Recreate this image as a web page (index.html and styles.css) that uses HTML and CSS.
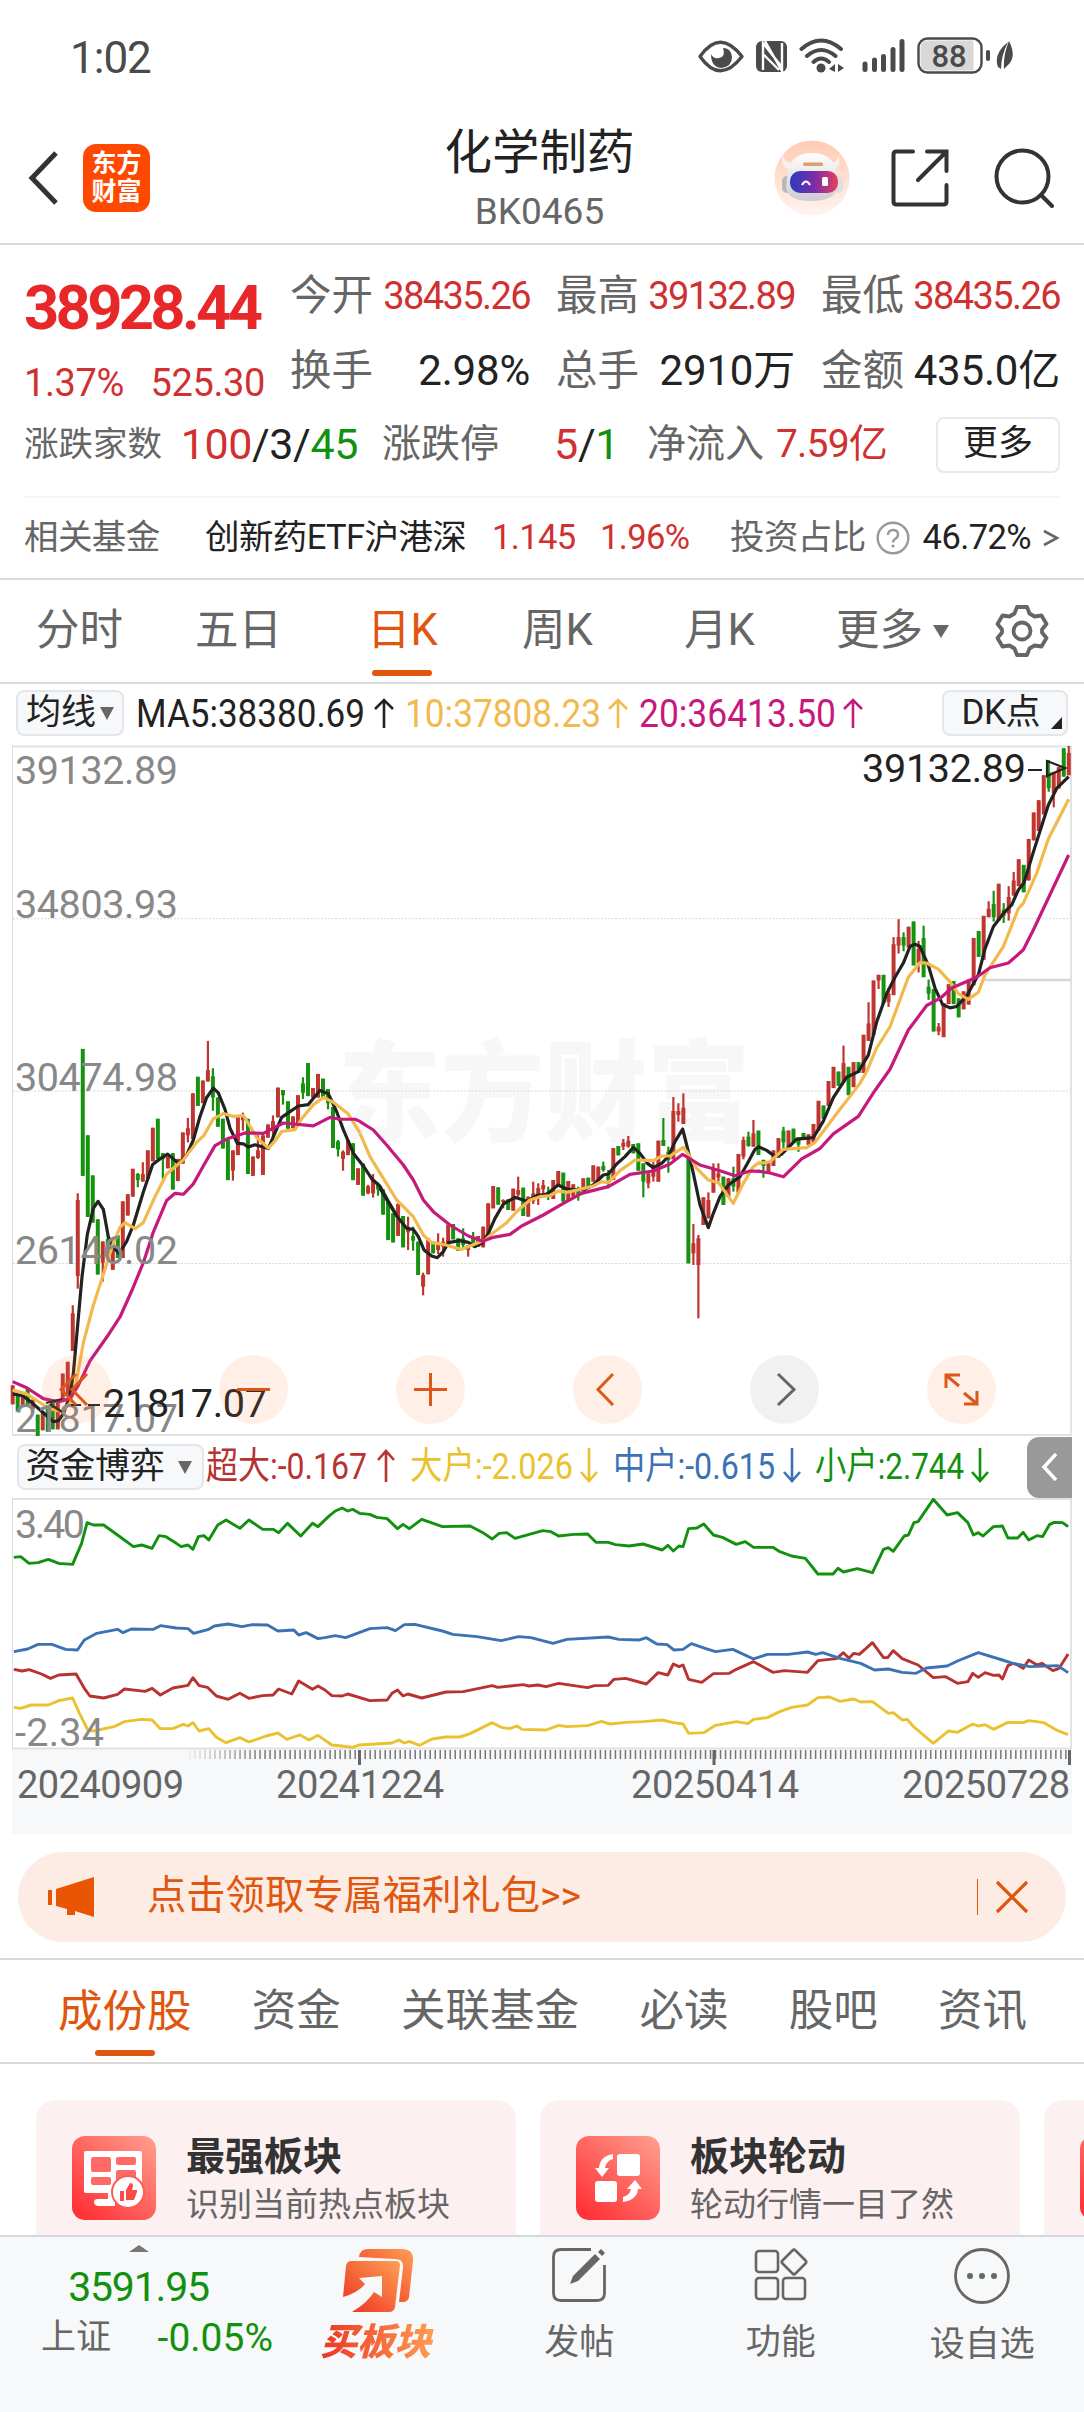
FILE: index.html
```html
<!DOCTYPE html>
<html lang="zh-CN">
<head>
    <title>化学制药 BK0465</title>
    <meta charset="utf-8">
    <link rel="stylesheet" href="styles.css">
</head>
<body>

<div class="status-bar">
    <span class="time">1:02</span>
    <svg class="status-icons" width="320" height="40" viewBox="695 36 320 40">
        <g fill="none" stroke="#4a4a4a" stroke-width="3.4">
            <path d="M700 56.500Q720 28 742 56.500Q720 85 700 56.500Z" stroke-linejoin="round"/>
        </g>
        <path d="M711 54q0 13 10 14q11-1 11-11q-1-9-9-9q3 9-4 10q-6 1-8-4z" fill="#4a4a4a"/>
        <rect x="756" y="41" width="31" height="31" rx="6" fill="#4a4a4a"/>
        <path d="M763 70V43L781 66M765 41l17 30V43M763 54l16 16" fill="none" stroke="#fff" stroke-width="2.400"/>
        <g fill="none" stroke="#4a4a4a" stroke-width="4" stroke-linecap="round">
            <path d="M801.500 49q19.500-17 39.500 0M807 56q14-12 28.500 0M813.500 62q7.500-7 15.500 0"/>
        </g>
        <circle cx="821" cy="68" r="4.500" fill="#4a4a4a"/>
        <path d="M835 64v8l-6-3zM838 64l6 4-6 4z" fill="#4a4a4a"/>
        <g stroke="#4a4a4a" stroke-width="5" stroke-linecap="round">
            <path d="M865 64v5.500M874.500 60v9.500M883.500 56.500v13M893 49.500v20M902 41.500v28"/>
        </g>
        <rect x="918.500" y="38.500" width="63" height="34" rx="9" fill="#fff" stroke="#4a4a4a" stroke-width="2.400"/>
        <path d="M928 40.500h45.500v30H928q-7.500 0-7.500-8V48.500q0-8 7.500-8z" fill="#d8d8d8"/>
        <text class="battery-text" x="949" y="66.500" text-anchor="middle">88</text>
        <rect x="986" y="50" width="4" height="11" rx="2" fill="#4a4a4a"/>
        <path d="M1009 41q8 16-1 24l-4 4q-1-14 5-28zM1008 42q-15 12-10 25l3 2q0-13 7-27z" fill="#4a4a4a"/>
    </svg>
</div>

<div class="header">
    <div class="header-left">
        <svg width="36" height="58" viewBox="0 0 36 58"><path d="M31 4L7 29l24 25" fill="none" stroke="#333" stroke-width="5"/></svg>
        <div class="logo">东方<br>财富</div>
    </div>
    <div class="header-title">
        <div class="name">化学制药</div>
        <div class="num">BK0465</div>
    </div>
    <div class="header-right">
        <svg width="76" height="76" viewBox="0 0 76 76">
            <defs>
                <linearGradient id="peach" x1="0" y1="0" x2="0" y2="1"><stop offset="0" stop-color="#ffcbb2"/><stop offset="1" stop-color="#fff4ef"/></linearGradient>
                <linearGradient id="visor"><stop offset="0" stop-color="#2b3cc0"/><stop offset="0.500" stop-color="#7a2ca8"/><stop offset="1" stop-color="#e8405c"/></linearGradient>
                <linearGradient id="helmet" x1="0" y1="0" x2="0" y2="1"><stop offset="0" stop-color="#fff"/><stop offset="1" stop-color="#cfcbd0"/></linearGradient>
            </defs>
            <circle cx="38" cy="38" r="37.500" fill="url(#peach)"/>
            <path d="M9 14q1 9 7 8l3 7-7-1q-6-4-3-14zM64 14q0 9-6 8l-3 7 7-1q6-4 2-14z" fill="#f6efee"/>
            <rect x="8" y="36" width="10" height="17" rx="5" fill="#bbb6bb"/>
            <rect x="59" y="36" width="10" height="17" rx="5" fill="#e2dde0"/>
            <path d="M38 13q20 0 24 17l2 17q-3 14-27 14T12 47l2-17q5-17 24-17z" fill="url(#helmet)"/>
            <rect x="29" y="22.500" width="20" height="3.500" rx="1.500" fill="#dca06c"/>
            <rect x="16" y="31" width="48" height="22" rx="10" fill="url(#visor)"/>
            <path d="M28 45q4-7 8 0" fill="none" stroke="#fff" stroke-width="2.200"/>
            <rect x="48" y="37" width="6" height="9" rx="1.500" fill="#fff"/>
        </svg>
        <svg width="58" height="58" viewBox="0 0 58 58" fill="none" stroke="#333" stroke-width="4" stroke-linecap="round">
            <path d="M22 2.500H5.500q-3 0-3 3v47q0 3 3 3h47q3 0 3-3V36M36 2.500h19.500V22M54 4L27 31"/>
        </svg>
        <svg width="60" height="60" viewBox="0 0 60 60" fill="none" stroke="#333" stroke-width="4" stroke-linecap="round">
            <circle cx="28.500" cy="28.500" r="26"/><path d="M47 47l11 11"/>
        </svg>
    </div>
</div>

<div class="quote">
    <div class="quote-main">
        <div class="price-box">
            <div class="price num up">38928.44</div>
            <div class="change num up"><span>1.37%</span><span>525.30</span></div>
        </div>
        <div class="stats">
            <div class="stat"><span class="label">今开</span><span class="num small up">38435.26</span></div>
            <div class="stat"><span class="label">最高</span><span class="num small up">39132.89</span></div>
            <div class="stat"><span class="label">最低</span><span class="num small up">38435.26</span></div>
            <div class="stat"><span class="label">换手</span><span class="num">2.98%</span></div>
            <div class="stat"><span class="label">总手</span><span class="num">2910万</span></div>
            <div class="stat"><span class="label">金额</span><span class="num">435.0亿</span></div>
        </div>
    </div>
    <div class="quote-extra">
        <div class="extra count"><span class="label">涨跌家数</span><span class="num"><b class="up">100</b>/3/<b class="down">45</b></span></div>
        <div class="extra limit"><span class="label">涨跌停</span><span class="num"><b class="up">5</b>/<b class="down">1</b></span></div>
        <div class="extra inflow"><span class="label">净流入</span><span class="num up">7.59亿</span></div>
        <div class="more-btn">更多</div>
    </div>
    <div class="fund">
        <span class="gray fund-label">相关基金</span>
        <span class="fund-name">创新药ETF沪港深</span>
        <span class="up fund-price">1.145</span>
        <span class="up fund-pct">1.96%</span>
        <span class="gray">投资占比</span>
        <svg class="help" width="34" height="34" viewBox="0 0 34 34"><circle cx="17" cy="17" r="15.300" fill="none" stroke="#999" stroke-width="2.400"/><path d="M12 14q0-5 5-5t5 4.500q0 3-3 4.500-2 1-2 3.500" fill="none" stroke="#999" stroke-width="2.400"/><circle cx="17" cy="25" r="1.600" fill="#999"/></svg>
        <span class="fund-ratio">46.72%</span>
        <svg class="fund-more" width="18" height="18" viewBox="0 0 18 18"><path d="M2 2l13 7-13 7" fill="none" stroke="#666" stroke-width="2.600"/></svg>
    </div>
</div>

<div class="period-tabs">
    <span>分时</span>
    <span>五日</span>
    <span><span class="active">日K</span></span>
    <span>周K</span>
    <span>月K</span>
    <span class="more">更多<i class="caret"></i></span>
    <svg width="54" height="54" viewBox="0 0 54 54" fill="none" stroke="#666" stroke-width="3.800" stroke-linejoin="round">
        <path d="M22 3h10l2.500 6.500 5 3 7-1L51.500 20l-4.500 5.500v3l4.500 5.500-5 8.500-7-1-5 3L32 51H22l-2.500-6.500-5-3-7 1-5-8.500L7 28.500v-3L2.500 20l5-8.500 7 1 5-3z"/>
        <circle cx="27" cy="27" r="8.500"/>
    </svg>
</div>

<div class="ma-bar">
    <div class="pill">均线<i class="caret"></i></div>
    <svg class="legend" width="740" height="46" viewBox="134 690 740 46">
        <g fill="#222"><text x="136" y="727" textLength="229" lengthAdjust="spacingAndGlyphs">MA5:38380.69</text></g>
        <g fill="#f2b94c"><text x="405" y="727" textLength="196" lengthAdjust="spacingAndGlyphs">10:37808.23</text></g>
        <g fill="#c5197d"><text x="639" y="727" textLength="197" lengthAdjust="spacingAndGlyphs">20:36413.50</text></g>
        <g fill="none" stroke-width="2.600">
            <path d="M384 728V700M375 709l9-9 9 9" stroke="#222"/>
            <path d="M618 728V700M609 709l9-9 9 9" stroke="#f2b94c"/>
            <path d="M853 728V700M844 709l9-9 9 9" stroke="#c5197d"/>
        </g>
    </svg>
    <div class="pill dk">DK点<i class="corner"></i></div>
</div>

<svg class="kline" width="1084" height="696" viewBox="0 740 1084 696">
    <text class="watermark" x="338" y="1133" textLength="412" lengthAdjust="spacingAndGlyphs">东方财富</text>
    <path d="M13 918.700H1071M13 1091H1071M13 1263.500H1071" stroke="#d8d8d8" stroke-dasharray="2 1.500"/>
    <path d="M12 746.500H1072M12 1435H1072M1071 746V1436" stroke="#e2e2e2" stroke-width="2"/>
    <path d="M12.500 746V1436" stroke="#dcdcdc"/>
    <path d="M985 980H1071" stroke="#d3d7da" stroke-width="2.500"/>
    <g id="candles"></g>
    <g class="ma" transform="translate(0 720) scale(0.33333 0.47192)">
        <polyline class="ma5" points="38,1428 68,1432 98,1448 130,1468 160,1487 175,1485 190,1470 210,1432 220,1385 232,1290 246,1180 262,1090 280,1035 294,1020 310,1037 325,1095 340,1118 358,1130 380,1105 400,1070 430,1000 458,942 480,930 503,920 520,930 535,940 560,922 580,890 600,840 620,800 640,780 655,790 675,825 690,865 712,897 730,898 745,905 765,900 805,908 825,875 845,842 870,830 895,818 925,815 942,800 960,785 985,792 1010,830 1030,868 1060,918 1090,945 1115,972 1140,988 1165,1020 1190,1050"/>
        <polyline class="ma10" points="38,1420 80,1428 110,1442 150,1460 185,1465 210,1448 228,1405 250,1320 280,1240 310,1175 340,1108 360,1075 375,1065 405,1078 430,1065 465,1010 500,962 550,932 590,895 612,880 640,845 670,834 700,840 730,838 745,855 770,885 805,907 825,892 845,872 885,868 905,845 940,815 970,800 1000,810 1045,835 1080,875"/>
        <polyline class="ma20" points="38,1402 80,1415 130,1438 175,1445 210,1438 235,1410 270,1358 320,1308 360,1265 395,1210 430,1150 460,1085 500,1018 525,1003 550,1005 580,983 610,945 645,902 680,888 735,875 790,876 850,854 940,860 990,842 1020,846 1065,846 1082,851"/>
    </g>
    <g class="ma" transform="translate(360 1000) scale(0.33333)">
        <polyline class="ma5" points="60,565 90,615 110,648 140,685 160,688 175,710 192,750 215,768 232,773 250,755 265,728 300,722 325,727 345,740 368,728 385,700 405,655 430,612 465,592 500,604 530,587 562,582 594,555 620,567 670,570 700,555 730,525 745,522 770,492 795,470 820,442 840,460 862,490 880,503 905,490 925,470 945,425 968,387 985,455 1000,520 1020,615 1045,683 1060,640 1080,590 1105,555 1140,530 1165,485 1185,448 1200,438"/>
        <polyline class="ma10" points="0,400 30,470 70,535 110,600 160,650 190,705 215,728 250,733 280,742 305,748 330,738 375,720 400,698 440,668 475,630 510,600 540,590 570,587 595,573 620,577 660,568 700,558 725,545 745,548 780,512 825,480 880,482 905,468 930,468 950,455 970,442 985,462 1010,505 1045,540 1075,548 1120,610 1150,550 1180,500 1200,485"/>
        <polyline class="ma20" points="0,365 40,390 80,435 130,495 160,540 190,600 220,635 270,675 325,708 368,724 400,712 450,703 485,678 550,645 610,610 665,580 745,560 810,523 880,513 930,492 968,463 1020,495 1080,512 1125,527 1170,513 1200,514"/>
    </g>
    <g class="ma" transform="translate(700 720) scale(0.33333 0.47192)">
        <polyline class="ma5" points="175,904 200,912 225,925 245,920 290,888 340,885 370,850 400,800 440,757 475,745 505,710 530,640 560,580 585,545 610,515 630,480 645,475 660,480 685,520 705,568 728,603 750,610 770,607 800,585 835,540 855,485 880,438 910,410 935,392 955,360 972,345 1000,280 1045,180 1070,145 1106,120"/>
        <polyline class="ma10" points="175,940 210,936 250,910 320,906 345,895 420,825 480,770 500,745 530,695 570,650 625,545 660,514 680,515 715,528 750,555 775,580 805,592 835,577 855,540 910,480 955,400 970,388 1010,325 1045,252 1106,168"/>
        <polyline class="ma20" points="175,956 210,960 250,968 305,930 360,908 400,877 475,840 525,785 570,740 625,657 680,605 720,590 755,568 830,545 870,525 925,515 970,487 1000,445 1030,400 1060,355 1106,286"/>
    </g>
    <path d="M1028 770h14M1047 761l18 7-18 8z" fill="none" stroke="#222" stroke-width="2.200"/>
    <g class="axis">
        <text x="15" y="784" textLength="163">39132.89</text>
        <text x="15" y="918" textLength="163">34803.93</text>
        <text x="15" y="1091" textLength="163">30474.98</text>
        <text x="15" y="1264" textLength="163">26146.02</text>
        <text x="15" y="1431.500" textLength="163">21817.07</text>
    </g>
    <g class="mark">
        <text x="862" y="781.500" textLength="164">39132.89</text>
        <text x="103" y="1417" textLength="164">21817.07</text>
        <path d="M46 1403l16-4M50 1404l12 8M71 1405h10M88 1405h12" fill="none" stroke="#222" stroke-width="2.200"/>
    </g>
    <g class="tools">
        <circle cx="76.500" cy="1389.500" r="34.500"/><circle cx="253.500" cy="1389.500" r="34.500"/><circle cx="430.500" cy="1389.500" r="34.500"/>
        <circle cx="607.500" cy="1389.500" r="34.500"/><circle cx="784.500" cy="1389.500" r="34.500" class="off"/><circle cx="961.500" cy="1389.500" r="34.500"/>
        <path d="M76 1374l-15 15.500 15 15.500M87 1374l-15 15.500 15 15.500M237 1389.500h33M414 1389.500h33M430.500 1373v33M613 1374l-15 15.500 15 15.500"/>
        <path d="M778 1374l16 15.500-16 15.500" class="off"/>
        <path d="M946 1388v-13h14M947 1376l12 10M964 1404h13v-13M976 1403l-12-10"/>
    </g>
</svg>

<div class="fund-bar">
    <div class="pill wide">资金博弈<i class="caret"></i></div>
    <svg class="legend" width="794" height="54" viewBox="205 1440 794 54">
        <g fill="#b83232"><text x="206" y="1479" textLength="161" lengthAdjust="spacingAndGlyphs">超大:-0.167</text></g>
        <g fill="#eac22f"><text x="410" y="1479" textLength="163" lengthAdjust="spacingAndGlyphs">大户:-2.026</text></g>
        <g fill="#3b72b4"><text x="613" y="1479" textLength="162" lengthAdjust="spacingAndGlyphs">中户:-0.615</text></g>
        <g fill="#12900f"><text x="815" y="1479" textLength="149" lengthAdjust="spacingAndGlyphs">小户:2.744</text></g>
        <g fill="none" stroke-width="2.600">
            <path d="M386 1482v-31M378 1460l8-9 8 9" stroke="#b83232"/>
            <path d="M589 1448v32M581 1472l8 9 8-9" stroke="#eac22f"/>
            <path d="M792 1448v32M784 1472l8 9 8-9" stroke="#3b72b4"/>
            <path d="M980 1448v32M972 1472l8 9 8-9" stroke="#12900f"/>
        </g>
    </svg>
    <div class="fold"><svg width="20" height="30" viewBox="0 0 20 30"><path d="M16 2L4 15l12 13" fill="none" stroke="#fff" stroke-width="3.500"/></svg></div>
</div>

<svg class="game" width="1084" height="336" viewBox="0 1498 1084 336">
    <rect x="12" y="1749" width="1060" height="85" fill="#f7f8fa"/>
    <path d="M12 1499H1072M12 1748.500H1072M1071 1499V1749" stroke="#e2e2e2" stroke-width="2"/>
    <path d="M12.500 1499V1749" stroke="#dcdcdc"/>
    <g class="flow" transform="translate(0 1420) scale(0.69133 0.33333)">
        <polyline stroke="#eac22f" points="20,862 30,865 45,855 70,855 85,842 105,834 115,880 127,930 135,933 165,920 180,905 205,898 220,900 232,926 250,926 265,913 272,918 279,908 288,933 302,926 313,952 327,968 347,953 360,966 385,948 402,939 415,958 434,945 447,960 460,946 480,975 495,978 510,982 520,975 567,969 577,960 585,969 592,964 607,976 625,957 645,951 665,951 680,941 712,908 725,922 737,926 748,918 755,928 790,930 808,916 820,920 850,917 870,904 882,912 905,907 930,905 958,900 974,908 988,912 996,940 1018,938 1035,916 1065,905 1082,911 1090,898 1110,893 1128,875 1145,862 1168,855 1183,833 1200,831 1215,844 1235,837 1245,846 1262,845 1285,880 1292,878 1305,900 1312,898 1322,921 1350,970 1372,933 1385,937 1407,912 1415,918 1425,914 1437,928 1458,907 1480,908 1488,902 1510,908 1530,932 1545,944"/>
        <polyline stroke="#b83232" points="20,748 32,753 42,749 60,762 73,775 85,765 110,762 122,805 130,828 150,834 170,823 180,807 210,814 220,805 232,825 250,804 272,796 279,773 288,797 300,802 313,828 330,838 347,820 360,835 380,827 395,825 403,807 422,822 432,783 452,808 460,798 470,810 480,827 495,828 503,822 535,842 560,840 567,820 575,810 583,828 590,822 610,834 645,816 670,815 712,797 720,802 757,794 765,798 778,795 790,800 808,790 850,803 860,797 880,796 888,778 905,775 935,792 952,758 966,765 974,732 982,740 988,735 996,778 1015,787 1032,761 1055,760 1065,748 1090,725 1118,757 1135,752 1168,757 1183,722 1210,716 1220,698 1228,715 1235,700 1243,703 1262,668 1278,713 1284,713 1292,692 1305,716 1328,735 1350,773 1368,770 1385,790 1400,785 1407,760 1415,772 1425,758 1437,766 1445,765 1450,777 1458,737 1465,730 1472,735 1480,745 1488,720 1500,735 1507,730 1523,752 1532,745 1545,702"/>
        <polyline stroke="#3b72b4" points="20,695 40,687 55,673 75,673 95,688 112,690 122,660 140,640 170,628 178,638 190,627 222,628 232,617 255,624 272,626 280,640 302,628 310,618 330,612 350,620 365,614 387,615 402,633 425,630 432,645 443,638 460,656 470,653 485,647 500,653 535,626 560,623 572,632 585,614 600,613 640,633 655,643 690,650 725,662 750,650 768,653 800,670 820,658 880,651 895,658 925,660 935,653 950,672 965,674 975,690 988,688 1000,671 1020,685 1035,695 1060,688 1090,717 1110,703 1140,703 1168,696 1180,703 1190,698 1215,715 1245,730 1265,750 1285,747 1305,757 1325,760 1340,744 1370,738 1385,723 1415,698 1450,720 1465,730 1490,740 1530,737 1545,758"/>
        <polyline stroke="#12900f" points="20,412 30,410 42,430 55,428 70,418 85,430 105,433 118,370 126,308 135,315 150,315 170,345 193,380 205,375 220,385 230,347 240,350 255,370 262,380 272,375 279,388 287,350 295,347 302,360 315,315 327,300 347,325 360,300 380,328 395,328 403,338 416,310 435,348 452,310 460,320 475,290 485,273 495,264 503,273 510,268 520,280 535,283 545,292 560,296 575,326 583,313 592,326 610,298 640,320 680,318 700,340 712,357 722,340 733,338 745,355 785,332 797,335 808,348 830,343 850,342 862,367 880,367 890,374 910,378 930,372 958,390 966,376 974,393 982,378 988,380 996,326 1008,324 1018,312 1032,345 1045,352 1065,373 1078,365 1090,382 1118,382 1128,395 1145,408 1165,415 1183,462 1205,462 1212,445 1220,456 1240,446 1262,458 1278,388 1285,383 1292,394 1308,348 1314,345 1322,308 1328,305 1350,238 1370,285 1385,278 1400,308 1408,345 1415,338 1422,348 1437,320 1450,318 1458,354 1472,354 1480,337 1488,360 1500,347 1508,350 1518,314 1525,307 1537,308 1545,320"/>
    </g>
    <g class="axis">
        <text x="15" y="1538" textLength="70">3.40</text>
        <text x="15" y="1746" textLength="89">-2.34</text>
    </g>
    <g id="ticks"></g>
    <g class="dates">
        <text x="17" y="1798" textLength="167">20240909</text>
        <text x="276" y="1798" textLength="168">20241224</text>
        <text x="631" y="1798" textLength="168">20250414</text>
        <text x="902" y="1798" textLength="168">20250728</text>
    </g>
</svg>

<div class="banner">
    <svg width="48" height="42" viewBox="0 0 48 42"><path d="M0 14h4v15H0zM8 13L46 1v40l-19-6v4h-8v-6l-11-3z" fill="#ea5504"/></svg>
    <span>点击领取专属福利礼包&gt;&gt;</span>
    <i class="line"></i>
    <svg width="34" height="34" viewBox="0 0 34 34"><path d="M2 2l30 30M32 2L2 32" fill="none" stroke="#e0560e" stroke-width="3.200"/></svg>
</div>

<div class="info-tabs">
    <span class="active">成份股</span>
    <span>资金</span>
    <span>关联基金</span>
    <span>必读</span>
    <span>股吧</span>
    <span>资讯</span>
</div>

<div class="cards">
    <div class="card">
        <svg width="84" height="84" viewBox="0 0 84 84">
            <defs><linearGradient id="red" x1="1" y1="0.100" x2="0.200" y2="1"><stop offset="0" stop-color="#ff9a8a"/><stop offset="1" stop-color="#ff3338"/></linearGradient></defs>
            <rect width="84" height="84" rx="13" fill="url(#red)"/>
            <path d="M14 15h54q2 0 2 2v38q0 2-2 2H14q-2 0-2-2V17q0-2 2-2z" fill="#fff"/>
            <path d="M36 55h7v15H26q-4-1-4-4t4-3h10z" fill="#fff"/>
            <g fill="#ff6a66"><rect x="19" y="21" width="20" height="15" rx="2"/><rect x="44" y="21" width="20" height="8" rx="2"/><rect x="19" y="41" width="20" height="8" rx="2"/><rect x="44" y="34" width="20" height="16" rx="2"/></g>
            <circle cx="56" cy="56" r="17" fill="#ff5a58"/><circle cx="56" cy="56" r="15" fill="#fff"/>
            <path d="M48 55h4v10h-4zM54 54l4-7q3 0 3 3l-1 4h5v2l-3 8h-8z" fill="#ff4a4a"/>
        </svg>
        <div class="card-text">
            <div class="card-title">最强板块</div>
            <div class="card-desc">识别当前热点板块</div>
        </div>
    </div>
    <div class="card">
        <svg width="84" height="84" viewBox="0 0 84 84">
            <rect width="84" height="84" rx="13" fill="url(#red)"/>
            <g fill="#fff"><rect x="41" y="18" width="23" height="22" rx="3"/><rect x="19" y="45" width="22" height="21" rx="3"/>
            <path d="M37 18v5q-7 2-8 9h4l-7 9-7-9h4q1-12 14-14zM47 66v-5q7-2 8-8h-4l8-9 7 9h-4q-1 11-15 13z"/></g>
        </svg>
        <div class="card-text">
            <div class="card-title">板块轮动</div>
            <div class="card-desc">轮动行情一目了然</div>
        </div>
    </div>
    <div class="card">
        <svg width="84" height="84" viewBox="0 0 84 84"><rect width="84" height="84" rx="13" fill="url(#red)"/></svg>
    </div>
</div>

<div class="bottom-bar">
    <div class="index">
        <i class="tri"></i>
        <div class="index-value">3591.95</div>
        <div class="index-row"><span>上证</span><span class="down">-0.05%</span></div>
    </div>
    <div class="item buy">
        <svg width="72" height="66" viewBox="0 0 72 66">
            <defs><linearGradient id="orange" x1="1" y1="0" x2="0" y2="1"><stop offset="0" stop-color="#ffa054"/><stop offset="1" stop-color="#ec3020"/></linearGradient></defs>
            <path d="M17 9q1-8 9-8h34q12 0 11 12l-4 36q-1 5-6 5h-4l4-34q1-9-8-9z" fill="url(#orange)"/>
            <path d="M9 13h45q4 0 4 4l-5 42q-1 5-6 5H10Q25 55 32 44l8 5V28L17 30l6 6Q16 45 1 49L4 18q1-5 5-5z" fill="url(#orange)"/>
        </svg>
        <span>买板块</span>
    </div>
    <div class="item">
        <svg width="54" height="54" viewBox="0 0 54 54" fill="none" stroke="#666" stroke-width="2.800">
            <path d="M39 1.500H9q-7.500 0-7.500 7.500v36q0 7.500 7.500 7.500h36q7.500 0 7.500-7.500V17"/>
            <path d="M18 36l3-8L43 6l5 5-22 22zM46 4l3-3 4 4-3 3z" fill="#666" stroke="none"/>
        </svg>
        <span>发帖</span>
    </div>
    <div class="item">
        <svg width="54" height="54" viewBox="0 0 54 54" fill="none" stroke="#666" stroke-width="2.600">
            <rect x="2" y="3" width="22" height="21" rx="3"/><rect x="2" y="30" width="22" height="21" rx="3"/><rect x="29" y="30" width="22" height="21" rx="3"/>
            <path d="M38.500 2.500q1.500-1.500 3 0l10 10q1.500 1.500 0 3l-10 10q-1.500 1.500-3 0l-10-10q-1.500-1.500 0-3z"/>
        </svg>
        <span>功能</span>
    </div>
    <div class="item">
        <svg width="56" height="56" viewBox="0 0 56 56" fill="none" stroke="#666" stroke-width="2.800">
            <circle cx="28" cy="28" r="26.500"/>
            <g fill="#666" stroke="none"><circle cx="16" cy="28" r="3"/><circle cx="28" cy="28" r="3"/><circle cx="40" cy="28" r="3"/></g>
        </svg>
        <span>设自选</span>
    </div>
</div>

<script src="chart.js"></script>

</body>
</html>
```
FILE: styles.css
```css
body, html {
    margin: 0;
    padding: 0;
}
body {
    width: 1084px;
    height: 2412px;
    overflow: hidden;
    background: #fff;
    color: #222;
    font-family: Roboto, "Noto Sans CJK SC", sans-serif;
    font-size: 34px;
    line-height: 1;
    display: flex;
    flex-direction: column;
}
body > * {
    flex: none;
    box-sizing: border-box;
}
svg {
    display: block;
    flex: none;
}
b {
    font-weight: normal;
}
i {
    font-style: normal;
}
.up {
    color: #d03030;
}
.down {
    color: #12900f;
}
.gray {
    color: #666;
}

.status-bar {
    height: 116px;
    padding: 36px 69px 0 70px;
    display: flex;
    justify-content: space-between;
}
.time {
    font-size: 44px;
    line-height: 44px;
    color: #4a4a4a;
    letter-spacing: -1px;
}
.battery-text {
    font-size: 31px;
    font-weight: 500;
    fill: #4a4a4a;
}

.header {
    height: 129px;
    border-bottom: 2px solid #dadada;
    padding: 0 30px 0 25px;
    display: grid;
    grid-template-columns: 1fr auto 1fr;
}
.header-left {
    display: flex;
    align-items: center;
    padding-bottom: 4px;
    gap: 22px;
}
.logo {
    width: 67px;
    height: 68px;
    box-sizing: border-box;
    padding-top: 6px;
    border-radius: 13px;
    background: #ff4800;
    color: #fff;
    text-align: center;
    font-size: 25px;
    line-height: 28px;
    font-weight: 700;
}
.header-title {
    text-align: center;
    padding-top: 11px;
}
.header-title .name {
    font-size: 47.500px;
    line-height: 52px;
}
.header-title .num {
    font-size: 37px;
    line-height: 40px;
    margin-top: 13px;
    color: #666;
}
.header-right {
    display: flex;
    align-items: center;
    justify-content: flex-end;
    gap: 41px;
    padding-bottom: 4px;
}
.header-right svg:last-child {
    margin-left: 4px;
}

.quote {
    height: 335px;
    padding: 23px 24px 0;
    border-bottom: 2px solid #dadada;
}
.quote-main {
    display: flex;
    height: 142px;
}
.price-box {
    width: 266px;
}
.price {
    font-size: 61.500px;
    line-height: 62px;
    margin-top: 9px;
    font-weight: 700;
    letter-spacing: -3.700px;
    color: #e82828;
}
.change {
    display: flex;
    justify-content: space-between;
    width: 241px;
    margin-top: 25px;
    font-size: 38px;
    line-height: 38px;
    letter-spacing: -0.400px;
}
.stats {
    flex: 1;
    display: grid;
    grid-template-columns: 240px 239px 239px;
    grid-auto-rows: 75px;
    column-gap: 26px;
}
.stat {
    display: flex;
    justify-content: space-between;
    line-height: 56px;
}
.stat .label {
    font-size: 41.500px;
    color: #666;
}
.stat .num {
    font-size: 42px;
    letter-spacing: -0.200px;
}
.stat .small {
    font-size: 38px;
    letter-spacing: -1.600px;
}
.quote-extra {
    box-sizing: border-box;
    display: flex;
    align-items: center;
    height: 88px;
    border-bottom: 2px solid #f5f5f5;
    padding-bottom: 17px;
}
.extra {
    display: flex;
    align-items: center;
    justify-content: space-between;
}
.extra .label {
    font-size: 39px;
    color: #666;
}
.extra .num {
    font-size: 43px;
    letter-spacing: -0.400px;
}
.count {
    width: 334px;
}
.count .label {
    font-size: 34.500px;
}
.limit {
    width: 237px;
    margin-left: 24px;
}
.inflow {
    width: 240px;
    margin-left: 28px;
}
.extra.inflow .num {
    font-size: 39px;
    letter-spacing: -0.800px;
}
.more-btn {
    width: 120px;
    height: 52px;
    margin-left: auto;
    border: 2px solid #e9e9e9;
    border-radius: 8px;
    text-align: center;
    font-size: 35px;
    line-height: 50px;
}
.fund {
    display: flex;
    align-items: center;
    height: 79px;
    white-space: nowrap;
    font-size: 34.500px;
    letter-spacing: -0.600px;
}
.fund-label {
    width: 181px;
}
.fund-name {
    width: 287px;
}
.fund-price {
    width: 108px;
}
.fund-pct {
    width: 130px;
}
.help {
    margin-left: 10px;
}
.fund-ratio {
    margin-left: 13px;
}
.fund-more {
    margin-left: auto;
}

.period-tabs {
    height: 104px;
    padding: 0 0 0 36px;
    border-bottom: 2px solid #dadada;
    display: grid;
    grid-template-columns: 159px 172px 155px 162px 152px 159px 54px;
    align-items: center;
    font-size: 43.500px;
    color: #666;
}
.period-tabs span {
    line-height: 62px;
}
.active {
    width: max-content;
    color: #e0560e;
    display: flex;
    flex-direction: column;
    align-items: center;
}
.active:after {
    content: "";
    width: 60px;
    height: 6px;
    margin-top: 8px;
    margin-bottom: -14px;
    border-radius: 3px;
    background: #e0560e;
}
.more {
    display: flex;
    align-items: center;
}
.caret {
    display: inline-block;
    margin-left: 10px;
    border: 8px solid transparent;
    border-top: 13px solid #666;
    border-bottom: 0;
}

.ma-bar {
    height: 56px;
    padding: 6px 16px 0;
    display: flex;
}
.pill {
    box-sizing: border-box;
    width: 108px;
    height: 46px;
    border: 2px solid #e3e6ea;
    border-radius: 8px;
    background: #f7f8fa;
    display: flex;
    align-items: center;
    justify-content: center;
    font-size: 35px;
    line-height: 40px;
}
.pill .caret {
    margin-left: 4px;
    border-left-width: 7px;
    border-right-width: 7px;
}
.ma-bar .legend {
    margin-left: 10px;
}
.legend {
    font-size: 38px;
}
.dk {
    width: 126px;
    margin-left: auto;
    justify-content: flex-end;
}
.corner {
    align-self: flex-end;
    margin: 0 4px 5px 11px;
    border-left: 11px solid transparent;
    border-bottom: 12px solid #222;
}
.pill.dk {
    letter-spacing: -0.500px;
}

.watermark {
    font-size: 110px;
    font-weight: 900;
    fill: #f7f7f7;
}
.ma polyline, .flow polyline {
    fill: none;
    stroke-width: 3.200px;
    stroke-linejoin: round;
    vector-effect: non-scaling-stroke;
}
.ma .ma5 {
    stroke: #222;
}
.ma .ma10 {
    stroke: #f2b94c;
}
.ma .ma20 {
    stroke: #c5197d;
}
.axis, .mark {
    font-size: 39.500px;
    fill: #888;
}
.mark {
    fill: #222;
}
.tools circle {
    fill: #ff7f3a;
    fill-opacity: 0.120;
}
.tools circle.off {
    fill: #888;
}
.tools path {
    fill: none;
    stroke: #d9581a;
    stroke-width: 3px;
}
.tools path.off {
    stroke: #666;
}

.fund-bar {
    height: 62px;
    padding: 0 12px 0 17px;
    display: flex;
    align-items: center;
}
.wide {
    width: 187px;
    letter-spacing: -0.300px;
}
.wide .caret {
    margin-left: 14px;
    margin-right: 3px;
}
.fund-bar .legend {
    font-size: 37px;
    margin-left: 1px;
}
.fold {
    width: 45px;
    height: 61px;
    margin-left: auto;
    border-radius: 12px 0 0 12px;
    background: #999;
    display: flex;
    align-items: center;
    justify-content: center;
}
.flow polyline {
    stroke-width: 2.900px;
}
.dates {
    font-size: 38px;
    fill: #666;
}

.banner {
    margin: 18px 18px 0;
    height: 90px;
    border-radius: 45px;
    background: #fcece3;
    color: #e0560e;
    font-size: 39.300px;
    padding: 0 37px 0 30px;
    display: flex;
    align-items: center;
}
.banner span {
    margin-left: 51px;
}
.line {
    width: 1px;
    height: 36px;
    margin: 0 17px 0 auto;
    background: #e0560e;
}

.info-tabs {
    height: 106px;
    margin-top: 16px;
    padding: 0 57px 0 58px;
    border-top: 2px solid #dadada;
    border-bottom: 2px solid #dadada;
    display: flex;
    align-items: center;
    justify-content: space-between;
    color: #666;
    font-size: 44.500px;
}
.info-tabs span {
    line-height: 62px;
}
.info-tabs .active:after {
    margin-top: 7px;
}

.cards {
    height: 171px;
    padding: 36px 0 0 36px;
    display: flex;
    gap: 24px;
    overflow: hidden;
}
.card {
    flex: none;
    box-sizing: border-box;
    width: 480px;
    height: 160px;
    padding: 36px;
    border-radius: 20px;
    background: #fdf0f0;
    display: flex;
    gap: 30px;
}
.card-title {
    font-size: 39px;
    line-height: 42px;
    font-weight: 700;
    color: #333;
}
.card-desc {
    margin-top: 7px;
    font-size: 33px;
    line-height: 40px;
    color: #666;
}

.bottom-bar {
    height: 177px;
    border-top: 2px solid #d5d8dc;
    background: #f7f8fa;
    display: flex;
    color: #666;
}
.index {
    width: 277px;
    display: flex;
    flex-direction: column;
    align-items: center;
}
.tri {
    margin-top: 8px;
    border: 10px solid transparent;
    border-bottom: 7px solid #777;
    border-top: 0;
}
.index-value {
    margin-top: 13px;
    font-size: 41px;
    line-height: 44px;
    letter-spacing: -1.200px;
    color: #12900f;
}
.index-row {
    align-self: stretch;
    margin: 4px 4px 0 41px;
    display: flex;
    justify-content: space-between;
    font-size: 35px;
    line-height: 50px;
}
.index-row .down {
    font-size: 39px;
}
.item {
    width: 201.500px;
    padding-top: 11px;
    display: flex;
    flex-direction: column;
    align-items: center;
    font-size: 35px;
}
.item span {
    margin-top: 21px;
    line-height: 40px;
}
.buy svg {
    width: 72px;
    height: 66px;
}
.item.buy span {
    width: 124px;
    margin: 9px 4px 0 0;
    text-align: center;
    font-size: 37px;
    font-weight: 900;
    font-style: italic;
    background: linear-gradient(90deg, #ec3020, #ffa054);
    -webkit-background-clip: text;
    background-clip: text;
    color: transparent;
}
```
FILE: chart.js
```js
// each bar: colour, high, low, optional body top and body bottom
var panes = [
    { y: 720, k: 2.119, bars: 'r1410,1450 g1420,1465 r1430,1455 g1415,1455 r1440,1460 g1472,1517 r1465,1505 g1460,1508 g1440,1503 r1440,1503 r1385,1440 r1360,1430 r1240,1337,1257,1337 r1003,1205,1017,1178 g697,966 g880,1053 g965,1065 g1058,1175 r1105,1190,1105,1150 g1082,1140,1100,1130 r1100,1165 g1092,1140 r1020,1140 r1005,1050 r951,1010 g960,990,962,975 r937,978,962,978 r912,972 r864,935 g845,930 g918,972,918,930 r925,950 g918,995 r930,977 r874,940 r843,895,865,880 r791,888 g756,818 r764,812 r680,766,742,766 g738,828,755,800 g800,862 g845,908 g890,975 r912,976,912,955 r842,922 r832,870,838,848 g845,962 r925,966 r880,930,912,928 r880,964 r857,885 r838,887,850,870 r779,842 g784,815,784,795 g808,866 r840,865 r795,858 g757,803,770,790 g727,797 r780,800 r750,800 g760,800 g782,825,782,812 g820,907 g890,925,893,910 r912,955,915,930 r890,922 g897,975 r950,985 g940,1008 r985,1005,988,1003 r962,1012,975,1003 g980,1008,985,995 g995,1048 g1020,1102 g1045,1107 r1025,1093' },
    { y: 1000, k: 3, bars: 'g648,742 r650,750,685,697 g680,752,708,722 g725,825 r818,886,825,860 r715,823 g725,760 r700,762,730,750 r713,770,725,740 r674,740 g672,718 g715,752 g685,750,715,735 r735,770,735,750 g696,742,712,735 r708,740 r680,742 r610,705 r558,625 g562,614 r598,625,600,606 g598,630 r566,632 r530,590,570,584 g563,648 r590,650 r545,612,580,604 r550,615,564,585 r540,580,555,568 g560,600,575,585 r540,597 r513,560 g518,605 r543,600 r553,590 g560,602,570,585 r535,570 g533,565 r496,545 r500,540 g485,515,498,510 g510,565,520,540 r444,540 g438,466 r417,450,428,440 r408,443,422,440 g432,460 g430,512 g490,592,490,545 r520,565,520,550 r485,545,495,530 r422,545 g354,438,420,438 g440,518,455,480 r291,478,333,478 r310,365,333,345 r280,372,323,372 g475,790 r672,795,730,760 r705,955,715,795 r592,675 r577,655,600,655 r490,578,510,578 r490,545,520,532 g530,615 r535,590 g500,575,535,560 r462,578 r410,478,420,470 g395,440,410,438 r360,440,400,440 g392,465' },
    { y: 720, k: 2.119, bars: 'g932,970,932,945 r935,962 r912,945 r886,928 g862,915,870,895 r870,905 g866,895 g885,915,885,900 g875,890 r878,900 r856,895 r807,870 g817,845 r765,818 r735,780 g745,775 r690,768,727,768 g735,795 r725,778 g725,748 r667,748 r598,680,643,680 r552,668 r540,570,540,552 g540,600 r568,608,580,598 r460,583,475,583 r422,495,460,478 g450,490,460,478 r438,482 g427,520 r468,535,485,515 g436,545,462,545 g550,593,565,580 g570,660 r642,668,650,660 r600,672 r560,602 g553,602 g590,630 r575,613 r550,603 r462,562 g447,502 r415,508 r384,418,400,418 g362,427,390,418 r347,425 g388,430,402,415 r352,425,375,410 r322,372,340,372 r295,352 g307,365 r252,340 r196,255 r170,235 r117,200 g85,152,110,145 r110,185,110,155 r100,145 g60,120 r55,117,70,117' }
];

var colors = { r: '#bf3530', g: '#16920f' };
var html = '', n = 0;
panes.forEach(function(p) {
    p.bars.split(' ').forEach(function(bar) {
        var v = bar.slice(1).split(',').map(function(s) {
            return p.y + s / p.k;
        });
        if (v.length < 4) {
            v[2] = v[0];
            v[3] = v[1];
        }
        var x = 12.7 + n++ * 5.005, c = colors[bar[0]];
        html += '<path d="M' + x + ' ' + v[0] + 'V' + v[1] + '" stroke="' + c + '" stroke-width="2.2"/>'
            + '<path d="M' + x + ' ' + v[2] + 'V' + v[3] + '" stroke="' + c + '" stroke-width="4"/>';
    });
});
document.getElementById('candles').innerHTML = html;

// trading day ruler, fades in on the left
html = '';
for (var i = 0; i < 176; i++) {
    html += '<path d="M' + (190 + i * 5.005) + ' 1750v9" stroke="#777" stroke-width="1.500" opacity="' + Math.min(1, 0.1 + i / 16) + '"/>';
}
[359.5, 714, 1069.5].forEach(function(x) {
    html += '<path d="M' + x + ' 1750v15" stroke="#666" stroke-width="3"/>';
});
document.getElementById('ticks').innerHTML = html;
```
